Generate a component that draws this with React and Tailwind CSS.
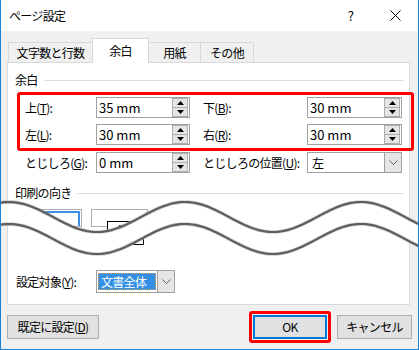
const font = "font-['Noto_Sans_CJK_JP','Liberation_Sans',sans-serif]";

const Spin = () => (
  <div className="flex flex-col w-[16px] h-[19px] mr-[1px]">
    <div className="h-[10px] bg-[#e5e5e5] border border-[#adadad] flex items-center justify-center">
      <svg width="7" height="4" viewBox="0 0 7 4">
        <path d="M3.5 0L7 4H0Z" fill="#000" />
      </svg>
    </div>
    <div className="h-[10px] -mt-[1px] bg-[#e5e5e5] border border-[#adadad] flex items-center justify-center">
      <svg width="7" height="4" viewBox="0 0 7 4">
        <path d="M0 0H7L3.5 4Z" fill="#000" />
      </svg>
    </div>
  </div>
);

const Chevron = () => (
  <svg width="9" height="5" viewBox="0 0 9 5">
    <path d="M0.5 0.5L4.5 4.5L8.5 0.5" stroke="#606060" fill="none" />
  </svg>
);

const SpinInput = ({ value, w = "w-[94px]" }) => (
  <div className={`flex items-center h-[21px] ${w} border border-[#a0a0a0] bg-white`}>
    <span className="flex-1 pl-[2px] text-[13px] tracking-normal leading-none">{value}</span>
    <Spin />
  </div>
);

const Key = ({ k }) => (
  <>
    (<span className="underline">{k}</span>):
  </>
);

const Row = ({ l1, v1, l2, children }) => (
  <div className="flex items-center h-[21px]">
    <span className="w-[71px] whitespace-nowrap">{l1}</span>
    <SpinInput value={v1} />
    <span className="ml-[13px] w-[104px] whitespace-nowrap">{l2}</span>
    {children}
  </div>
);

const GroupHead = ({ label, gap }) => (
  <div className="flex items-center h-[16px] pl-[7px] pr-[5px]">
    <span>{label}</span>
    <div className={`flex-1 h-px bg-[#dcdcdc] ${gap}`} />
  </div>
);

const wavePts = (off) => {
  const pts = [];
  for (let x = -4; x <= 424; x += 3) {
    const y = 217 + off - 15 * Math.cos((2 * Math.PI * (x - 8)) / 176);
    pts.push([x, y]);
  }
  return pts;
};

const Wave = () => {
  const top = wavePts(0);
  const bot = wavePts(22);
  const line = (p) => "M" + p.map(([x, y]) => `${x} ${y.toFixed(1)}`).join(" L");
  const fill = line(top) + " L" + [...bot].reverse().map(([x, y]) => `${x} ${y.toFixed(1)}`).join(" L") + "Z";
  return (
    <svg className="absolute left-0 top-0 pointer-events-none" width="419" height="350" viewBox="0 0 419 350">
      <path d="M62.5 234V244.5H78M142.5 234V244.5H126" stroke="#000" fill="none" />
      <path d={fill} fill="#fff" />
      <path d={line(top)} stroke="#b0b0b0" strokeWidth="3.6" fill="none" opacity="0.6" />
      <path d={line(bot)} stroke="#b0b0b0" strokeWidth="3.6" fill="none" opacity="0.6" />
      <path d={line(top)} stroke="#5f5f5f" strokeWidth="2.2" fill="none" />
      <path d={line(bot)} stroke="#5f5f5f" strokeWidth="2.2" fill="none" />
    </svg>
  );
};

export default function App() {
  return (
    <div className={`relative w-[419px] h-[350px] overflow-hidden bg-[#f0f0f0] border-x border-b border-[#1883d7] flex flex-col text-[12px] tracking-[-0.7px] text-black ${font}`}>
      {/* title bar */}
      <div className="h-[31px] bg-white flex items-center">
        <span className="pl-[8px] flex-1">ページ設定</span>
        <span className="w-[45px] text-center text-[13px]">?</span>
        <span className="w-[45px] flex justify-center">
          <svg width="11" height="11" viewBox="0 0 11 11">
            <path d="M0.5 0.5L10.5 10.5M10.5 0.5L0.5 10.5" stroke="#000" />
          </svg>
        </span>
      </div>

      <div className="flex flex-col px-[6px] pt-[7px]">
        {/* tabs */}
        <div className="flex items-end h-[24px] pl-[1px]">
          <div className="w-[85px] h-[20px] border-x border-t border-[#d9d9d9] flex items-center justify-center">文字数と行数</div>
          <div className="relative z-10 -ml-[1px] -mb-[1px] w-[57px] h-[25px] bg-white border-x border-t border-[#d9d9d9] flex items-center justify-center pb-[1px]">余白</div>
          <div className="-ml-[1px] w-[53px] h-[20px] border-x border-t border-[#d9d9d9] flex items-center justify-center">用紙</div>
          <div className="-ml-[1px] w-[54px] h-[20px] border-x border-t border-[#d9d9d9] flex items-center justify-center">その他</div>
        </div>

        {/* panel */}
        <div className="w-[403px] h-[243px] bg-white border border-[#d9d9d9] flex flex-col pt-[9px]">
          <GroupHead label="余白" gap="ml-[6px]" />

          <div className="flex flex-col gap-[6px] pl-[17px] mt-[9px]">
            <div className="relative flex flex-col gap-[6px]">
              <Row l1={<>上<Key k="T" /></>} v1="35 mm" l2={<>下<Key k="B" /></>}>
                <SpinInput value="30 mm" w="w-[95px]" />
              </Row>
              <Row l1={<>左<Key k="L" /></>} v1="30 mm" l2={<>右<Key k="R" /></>}>
                <SpinInput value="30 mm" w="w-[95px]" />
              </Row>
              <div className="absolute -left-[8px] -top-[5px] -right-[5px] -bottom-[6px] border-[3px] border-[#ff0000] rounded-[3px] pointer-events-none" />
            </div>
            <div className="mt-[1px]">
              <Row l1={<>とじしろ<Key k="G" /></>} v1="0 mm" l2={<>とじしろの位置<Key k="U" /></>}>
                <div className="flex items-center h-[21px] w-[95px] border border-[#a0a0a0] bg-white">
                  <span className="flex-1 pl-[4px]">左</span>
                  <div className="w-[17px] h-full bg-[#e5e5e5] border-l border-[#a0a0a0] flex items-center justify-center">
                    <Chevron />
                  </div>
                </div>
              </Row>
            </div>
          </div>

          <div className="mt-[12px]">
            <GroupHead label="印刷の向き" gap="ml-[5px]" />
          </div>

          <div className="flex pl-[17px] mt-[8px]">
            <div className="w-[57px] h-[18px] border border-[#adadad] p-[1px] overflow-hidden">
              <div className="h-[20px] border-2 border-[#3d8ee6]" />
            </div>
            <div className="ml-[9px] w-[57px] h-[18px] border border-[#adadad] flex justify-center">
              <div className="mt-[11px] w-[26px] h-[19px] bg-white border border-black flex justify-center text-[10px] font-bold leading-none pt-[2px]">A</div>
            </div>
          </div>

          <div className="flex items-center pl-[8px] mt-[43px]">
            <span className="w-[80px] whitespace-nowrap">設定対象<Key k="Y" /></span>
            <div className="flex items-center h-[23px] w-[79px] border border-[#a0a0a0] bg-white pl-[1px]">
              <span className="flex-1 h-[17px] bg-[#3390e6] text-white border border-dotted border-[#e8a050] flex items-center pl-[2px] leading-none">文書全体</span>
              <div className="ml-[1px] w-[17px] h-full bg-[#e5e5e5] border-l border-[#a0a0a0] flex items-center justify-center">
                <Chevron />
              </div>
            </div>
          </div>
        </div>

        {/* buttons */}
        <div className="flex items-center mt-[6px]">
          <button className="w-[92px] h-[24px] bg-[#e1e1e1] border border-[#adadad]">既定に設定(<span className="underline">D</span>)</button>
          <div className="ml-auto border-[3px] border-[#ff0000] rounded-[3px] p-[1px]">
            <button className="w-[74px] h-[24px] bg-[#e1e1e1] border-2 border-[#0078d7] flex items-center justify-center">OK</button>
          </div>
          <button className="ml-[6px] w-[75px] h-[24px] bg-[#e1e1e1] border border-[#adadad]">キャンセル</button>
        </div>
      </div>

      <Wave />
    </div>
  );
}
